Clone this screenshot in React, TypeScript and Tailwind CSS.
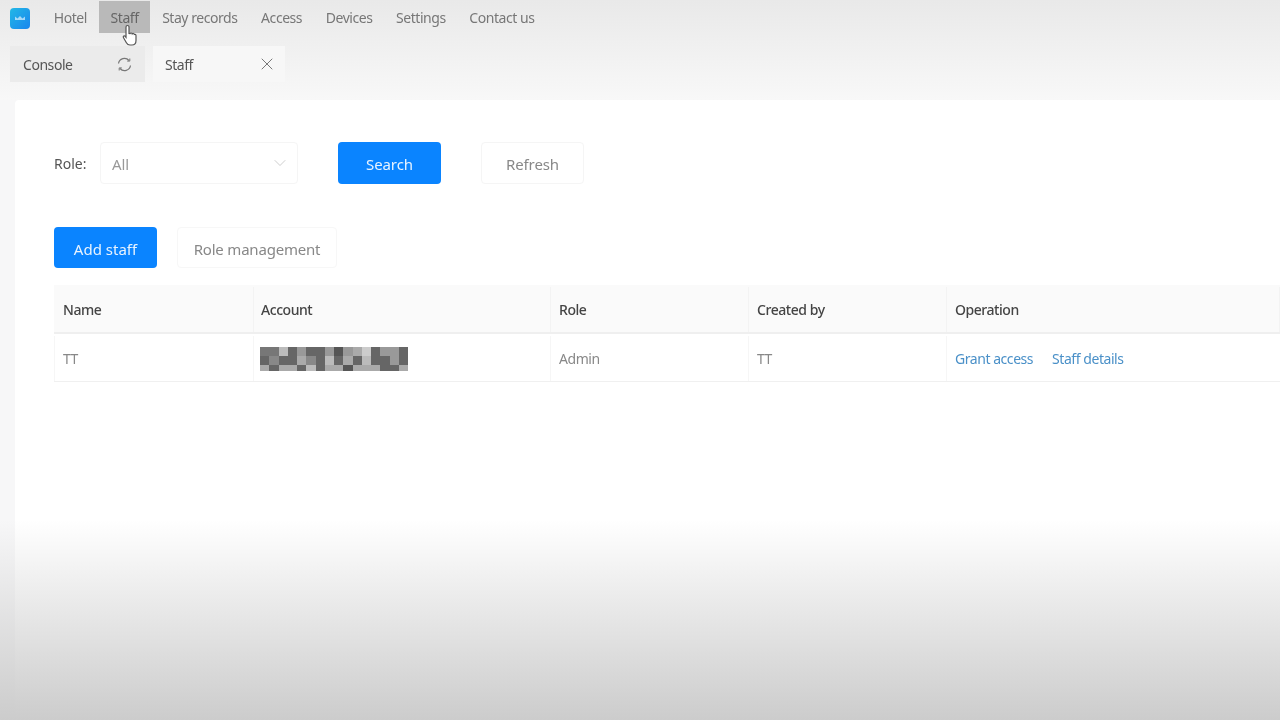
import { X, ChevronDown } from 'lucide-react'

const NAV_ITEMS = ['Hotel', 'Staff', 'Stay records', 'Access', 'Devices', 'Settings', 'Contact us']

const COLUMNS = [
  { title: 'Name', width: 'w-[200px]', pad: 'pl-[9px]' },
  { title: 'Account', width: 'w-[297px]', pad: 'pl-[7px]' },
  { title: 'Role', width: 'w-[198px]', pad: 'pl-[8px]' },
  { title: 'Created by', width: 'w-[198px]', pad: 'pl-[8px]' },
  { title: 'Operation', width: 'flex-1', pad: 'pl-[8px]' },
]

// rough mosaic of the blurred account
const MOSAIC = [
  { y: 0, h: 9, cells: '77b6966959ac6996' },
  { y: 9, h: 9, cells: '6866a86b6a6b6696' },
  { y: 18, h: 6, cells: 'a6aa6b6aa5aaa66a' },
]

function AccountMosaic() {
  return (
    <svg width="148" height="24" viewBox="0 0 16 24" preserveAspectRatio="none" shapeRendering="crispEdges" className="mt-[1px]">
      {MOSAIC.map(row =>
        row.cells.split('').map((c, x) => (
          <rect key={`${x}-${row.y}`} x={x} y={row.y} width="1" height={row.h} fill={`#${c}${c}${c}${c}${c}${c}`} />
        )),
      )}
    </svg>
  )
}

function Logo() {
  return (
    <svg width="20" height="21" viewBox="0 0 20 21" className="mt-[2px] shrink-0">
      <defs>
        <linearGradient id="logo" x1="0" y1="0" x2="1" y2="1">
          <stop offset="0" stopColor="#22b8e6" />
          <stop offset="1" stopColor="#1a86ee" />
        </linearGradient>
      </defs>
      <rect width="20" height="21" rx="4" fill="url(#logo)" />
      <path d="M5 8.500l2.500 2L10 8l2.500 2.500L15 8.500V12H5z" fill="#fff" opacity="0.6" />
    </svg>
  )
}

function Cursor() {
  return (
    <svg width="16" height="23" viewBox="0 0 16 22" className="absolute left-[122px] top-[24px]">
      <path
        d="M4 2.500a1.500 1.500 0 0 1 3 0V9l1 .1a1.200 1.200 0 0 1 2.200.3 1.200 1.200 0 0 1 2.100.5c1-.4 1.700.3 1.700 1.300V16c0 2.500-1.500 4.500-4 4.500H8c-1.700 0-2.800-.8-3.600-2.200L1.400 13c-.6-1.100.9-2.200 1.800-1.200L4 12.800z"
        fill="#fff"
        stroke="#555"
        strokeWidth="1.200"
      />
    </svg>
  )
}

function SyncIcon() {
  return (
    <svg width="15" height="15" viewBox="0 0 15 15" fill="none" stroke="#777" strokeWidth="1.200">
      <path d="M1.500 6.500A6 6 0 0 1 12 3.500" />
      <path d="M13.500 8.500A6 6 0 0 1 3 11.500" />
      <path d="M12.800 1.500v2.600h-2.600" strokeWidth="1" />
      <path d="M2.200 13.500v-2.600h2.600" strokeWidth="1" />
    </svg>
  )
}

export default function App() {
  return (
    <div className="relative h-[720px] w-[1280px] overflow-hidden bg-[#f7f7f8] font-['Noto_Sans','Open_Sans',sans-serif] text-[14px] tracking-[-0.45px] text-[#666] blur-[0.5px]">
      <div className="h-[100px] bg-gradient-to-b from-[#e9e9e9] to-[#f8f8f8]">
        <header className="flex h-[33px] items-start pl-[10px] pt-[6px]">
          <Logo />
          <nav className="-mt-[5px] ml-[12px] flex h-[32px] items-stretch">
            {NAV_ITEMS.map(item => (
              <span
                key={item}
                className={`flex items-center px-[11.8px] ${item === 'Staff' ? 'bg-[#b9b9b9] text-[#666]' : 'text-[#777]'}`}
              >
                {item}
              </span>
            ))}
          </nav>
        </header>

        <div className="ml-[10px] mt-[13px] flex h-[36px] gap-[8px]">
          <div className="flex w-[135px] items-center justify-between bg-[#ebebeb] pl-[13px] pr-[13px] text-[#555]">
            Console
            <SyncIcon />
          </div>
          <div className="flex w-[132px] items-center justify-between bg-[#f7f7f7] pl-[12px] pr-[8px] text-[#555]">
            Staff
            <X size={20} strokeWidth={1.200} className="text-[#777]" />
          </div>
        </div>
      </div>

      <main className="ml-[15px] h-[620px] rounded-tl-[4px] bg-white pl-[39px] pt-[42px]">
        <div className="flex h-[42px] items-center tracking-[-0.1px]">
          <span className="w-[46px] tracking-normal text-[#555]">Role:</span>
          <div className="flex h-full w-[198px] items-center justify-between rounded-[4px] border border-[#f5f5f5] pl-[11px] pr-[7px] pt-[3px] text-[15px] text-[#999]">
            All
            <ChevronDown size={20} strokeWidth={1} className="-mt-[3px] text-[#c4c4c4]" />
          </div>
          <button className="ml-[40px] h-full w-[103px] rounded-[4px] bg-[#0a84ff] pt-[3px] text-[15px] text-[#e8f3ff]">Search</button>
          <button className="ml-[40px] h-full w-[103px] rounded-[4px] border border-[#f5f5f5] pt-[3px] text-[15px] text-[#888]">Refresh</button>
        </div>

        <div className="mt-[43px] flex h-[41px] gap-[20px] tracking-[-0.2px]">
          <button className="w-[103px] rounded-[4px] bg-[#0a84ff] pt-[3px] text-[15px] tracking-normal text-[#e8f3ff]">Add staff</button>
          <button className="w-[160px] rounded-[4px] border border-[#f7f7f7] pt-[3px] text-[15px] text-[#888]">Role management</button>
        </div>

        <div className="mt-[17px] border-b border-[#f0f0f0] text-[#888]">
          <div className="flex h-[49px] border-b-2 border-[#efefef] bg-[#fafafa] pt-[2px] font-medium text-[#444]">
            {COLUMNS.map(col => (
              <div key={col.title} className={`flex items-center border-r border-[#f3f3f3] ${col.pad} ${col.width}`}>
                {col.title}
              </div>
            ))}
          </div>
          <div className="flex h-[47px] pt-[2px]">
            <div className="flex w-[200px] items-center border-r border-l border-[#f6f6f6] pl-[8px]">TT</div>
            <div className="flex w-[297px] items-center border-r border-[#f6f6f6] pl-[6px]">
              <AccountMosaic />
            </div>
            <div className="flex w-[198px] items-center border-r border-[#f6f6f6] pl-[8px]">Admin</div>
            <div className="flex w-[198px] items-center border-r border-[#f6f6f6] pl-[8px]">TT</div>
            <div className="flex flex-1 items-center gap-[19px] pl-[8px] text-[#4a90c8]">
              <span>Grant access</span>
              <span>Staff details</span>
            </div>
          </div>
        </div>
      </main>

      <Cursor />
      <div className="pointer-events-none absolute inset-x-0 bottom-0 h-[200px] bg-gradient-to-b from-transparent to-[#cccccc]" />
    </div>
  )
}
